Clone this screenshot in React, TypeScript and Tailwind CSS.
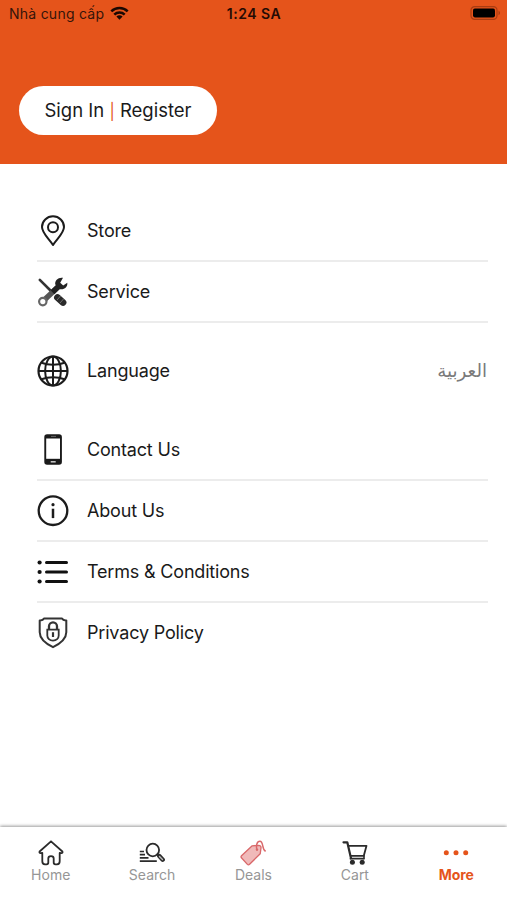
import type { ReactNode } from "react";

type IconProps = { children: ReactNode };

const MenuIcon = ({ children }: IconProps) => (
    <svg width="32" height="32" viewBox="0 0 32 32" fill="none" stroke="#1c1c1c" strokeWidth="2" className="shrink-0">
        {children}
    </svg>
);

const TabIcon = ({ children }: IconProps) => (
    <svg width="26" height="26" viewBox="0 0 26 26" fill="none" stroke="#2b2b2b" strokeWidth="1.8" strokeLinejoin="round" strokeLinecap="round">
        {children}
    </svg>
);

const StoreIcon = () => (
    <MenuIcon>
        <path d="M16 30C12.700 24.300 5 18.300 5 12a11 10.700 0 0 1 22 0c0 6.300-7.700 12.300-11 18Z" strokeLinejoin="round" />
        <circle cx="16" cy="12.300" r="5" />
    </MenuIcon>
);

const ServiceIcon = () => (
    <MenuIcon>
        <path d="M2.800 3.800 15 16" stroke="#333" strokeWidth="2.600" strokeLinecap="round" />
        <path d="m20.500 21.500 5.500 5" stroke="#2b2b2b" strokeWidth="6.800" strokeLinecap="round" />
        <path d="m23.500 20-3.500 4M26.500 23l-3.500 4" stroke="#777" strokeWidth="0.900" />
        <path d="M7 24.200 22 10" stroke="#555" strokeWidth="5.400" />
        <path d="M15.500 16.200 22.500 9.500" stroke="#222" strokeWidth="5.400" />
        <path d="M26 1.800c-4.500-.8-8.500 2.400-7.700 6.700l4.700 4.700c4 .8 7.900-1.900 7.300-6.400l-4.100 2.700-3-2.800Z" fill="#222" stroke="none" />
        <circle cx="5.800" cy="25.600" r="3.700" stroke="#666" strokeWidth="2.200" fill="#fff" />
    </MenuIcon>
);

const LanguageIcon = () => (
    <MenuIcon>
        <circle cx="16" cy="16" r="14.500" strokeWidth="2.200" />
        <ellipse cx="16" cy="16" rx="7.900" ry="14.500" />
        <path d="M16 1.500v29M1.500 16h29" />
        <path d="M4.500 7.800c6.500 2.600 16.500 2.600 23 0M4.500 24.200c6.500-2.600 16.500-2.600 23 0" />
    </MenuIcon>
);

const ContactIcon = () => (
    <MenuIcon>
        <rect x="7.300" y="0.300" width="17.600" height="30.500" rx="2.800" fill="#1a1a1a" stroke="none" />
        <rect x="9.200" y="4.500" width="13.800" height="20.300" fill="#fff" stroke="none" />
        <path d="M14 2.400h5" stroke="#777" strokeWidth="0.800" />
        <path d="M13.700 27.800h5" stroke="#ccc" strokeWidth="1.500" />
    </MenuIcon>
);

const AboutIcon = () => (
    <MenuIcon>
        <circle cx="16" cy="15.700" r="14.300" strokeWidth="2.300" />
        <circle cx="16" cy="9.700" r="1.600" fill="#1c1c1c" stroke="none" />
        <path d="M16 13.700v9.400" strokeWidth="2.500" />
    </MenuIcon>
);

const TermsIcon = () => (
    <MenuIcon>
        <g fill="#111" stroke="none">
            <circle cx="2.600" cy="6.500" r="2.100" />
            <circle cx="2.600" cy="16" r="2.100" />
            <circle cx="2.600" cy="25.500" r="2.100" />
        </g>
        <path d="M9.500 6.500h20M9.500 16h20M9.500 25.500h20" stroke="#111" strokeWidth="3" strokeLinecap="round" />
    </MenuIcon>
);

const PrivacyIcon = () => (
    <MenuIcon>
        <path d="M7 1.500h18c.7 1.400 2.300 2 4.300 1.900v11.800c0 7.500-6.800 11.700-13.300 15C9.500 26.900 2.700 22.700 2.700 15.200V3.400C4.700 3.500 6.300 2.900 7 1.500Z" stroke="#333" strokeWidth="2" strokeLinejoin="round" />
        <path d="M10.300 12.700h11.400v5.900c0 2.800-2.300 5-5.700 5s-5.700-2.200-5.700-5Z" stroke="#333" strokeWidth="1.800" />
        <path d="M12 12.700V9.300a4 4 0 0 1 8 0v3.400" stroke="#333" strokeWidth="2.300" />
        <path d="M16 15.200v4.800" stroke="#333" strokeWidth="2.200" />
    </MenuIcon>
);

const HomeIcon = () => (
    <TabIcon>
        <path d="M13 1.300 1.600 11.500c-.5 1 .1 1.800 1.200 1.600l1.500-.2v8.400c0 2 .7 3 2.700 3h1.600c1.200 0 1.700-.6 1.700-1.700v-4c0-1.600.7-2.400 2.700-2.400s2.700.8 2.700 2.400v4c0 1.100.5 1.700 1.700 1.700H19c2 0 2.700-1 2.700-3v-8.400l1.500.2c1.100.2 1.700-.6 1.200-1.600Z" />
    </TabIcon>
);

const SearchIcon = () => (
    <TabIcon>
        <circle cx="13.800" cy="10" r="6.300" />
        <path d="m18.300 14.400 1.500 1.300" />
        <path d="m20.300 16.100 3.400 3.600" strokeWidth="4.400" />
        <path d="m20.500 16.400 3 3.100" stroke="#bbb" strokeWidth="1.400" />
        <path d="M.8 11.500h4.200M.8 14.600h5.200M.8 17.800h8.700M.8 21.100h17" strokeWidth="1.700" strokeLinecap="butt" />
    </TabIcon>
);

const DealsIcon = () => (
    <TabIcon>
        <path d="M1.500 15.800c-.6.600-.6 1.300-.1 2l6 6.600c.6.600 1.500.6 2.200-.1L20.200 13.800 21 8c.2-1.600-.7-2.700-2.300-2.700L12.200 5.800Z" fill="#f0b9b9" stroke="#d9686a" strokeWidth="1.300" />
        <path d="M17 10C15.700 5.500 17 1.300 19.900 1.300c3.800 0 1.900 7.900 5.300 9.700" stroke="#d9686a" strokeWidth="1.500" />
        <circle cx="17" cy="9.600" r="1.200" fill="#d9686a" stroke="none" />
    </TabIcon>
);

const CartIcon = () => (
    <TabIcon>
        <path d="M1.500 2.300h3.800L9 18.300" strokeWidth="2.200" />
        <path d="M6.500 5.800h18l-2.700 10H8.800M8.500 18.700h13" strokeWidth="1.800" />
        <path d="M22 15.800v2.900" strokeWidth="1.600" />
        <circle cx="10.400" cy="22.200" r="2.500" fill="#2b2b2b" stroke="none" />
        <circle cx="20.200" cy="22.200" r="2.500" fill="#2b2b2b" stroke="none" />
    </TabIcon>
);

const MoreIcon = () => (
    <TabIcon>
        <g fill="#e5541b" stroke="none">
            <circle cx="3.300" cy="12.700" r="2.500" />
            <circle cx="13" cy="12.700" r="2.500" />
            <circle cx="22.700" cy="12.700" r="2.500" />
        </g>
    </TabIcon>
);

const groups = [
    [
        { label: "Store", icon: <StoreIcon />, line: true },
        { label: "Service", icon: <ServiceIcon />, line: true },
    ],
    [{ label: "Language", icon: <LanguageIcon />, line: false, value: "العربية" }],
    [
        { label: "Contact Us", icon: <ContactIcon />, line: true },
        { label: "About Us", icon: <AboutIcon />, line: true },
        { label: "Terms & Conditions", icon: <TermsIcon />, line: true },
        { label: "Privacy Policy", icon: <PrivacyIcon />, line: false },
    ],
];

const tabs = [
    { label: "Home", icon: <HomeIcon /> },
    { label: "Search", icon: <SearchIcon /> },
    { label: "Deals", icon: <DealsIcon /> },
    { label: "Cart", icon: <CartIcon /> },
    { label: "More", icon: <MoreIcon />, active: true },
];

const StatusBar = () => (
    <div className="grid grid-cols-3 items-center h-[26px] pl-[9px] pr-[6px] text-[14px] text-[#35140a]">
        <div className="flex items-center gap-[6px]">
            <span className="tracking-[0.25px] whitespace-nowrap">Nhà cung cấp</span>
            <svg width="19" height="14" viewBox="0 0 18 14" fill="none" stroke="#1b0802" strokeWidth="2.500" className="mb-px">
                <path d="M.8 5.400a11.800 11.800 0 0 1 16.400 0M3.800 8.600a7.400 7.400 0 0 1 10.400 0" />
                <path d="M9 13.700 5.900 10.600a4.600 4.600 0 0 1 6.200 0Z" fill="#1b0802" stroke="none" />
            </svg>
        </div>
        <div className="text-center font-semibold tracking-[0.5px] -ml-[2px] text-[#240b04]">1:24 SA</div>
        <svg width="31" height="14" viewBox="0 0 31 14" className="justify-self-end">
            <rect x="1" y="0.700" width="26" height="12.600" rx="3.600" fill="none" stroke="#a93c12" strokeWidth="1.200" />
            <rect x="3" y="2.600" width="22" height="8.800" rx="1.800" fill="#000" />
            <path d="M28.500 4.800c2 .7 2 3.700 0 4.400Z" fill="#a93c12" />
        </svg>
    </div>
);

const App = () => {
    return (
        <div className="flex flex-col w-[507px] h-[900px] overflow-hidden bg-white font-['Inter','Noto_Sans',sans-serif]">
            {/* header */}
            <header className="h-[163.500px] shrink-0 bg-[#e5541b]">
                <StatusBar />
                <button className="flex items-center justify-center mt-[60px] ml-[19px] w-[198px] h-[49px] rounded-full bg-white text-[18.500px] text-[#1a1a1a] whitespace-pre">
                    Sign In <span className="text-[16px] text-[#e5541b]">|</span> Register
                </button>
            </header>

            {/* menu */}
            <main className="flex-1 flex flex-col gap-[18px] pt-[36.500px] pl-[37px] pr-[19px]">
                {groups.map((rows, i) => (
                    <section key={i}>
                        {rows.map((row) => (
                            <div key={row.label} className="relative flex items-center gap-[18px] h-[61px] text-[18px] tracking-[-0.180px] text-[#1a1a1a]">
                                {row.icon}
                                <span className="flex-1">{row.label}</span>
                                {row.value && (
                                    <span lang="ar" dir="rtl" className="mr-[1px] tracking-normal font-['DejaVu_Sans','Noto_Sans',sans-serif] text-[18.200px] text-[#7a7a7a]">
                                        {row.value}
                                    </span>
                                )}
                                {row.line && <div className="absolute inset-x-0 bottom-[-1px] h-[2px] bg-[#ececec]" />}
                            </div>
                        ))}
                    </section>
                ))}
            </main>

            {/* bottom tabs */}
            <nav className="grid grid-cols-5 h-[73.500px] shrink-0 pt-[13.500px] bg-white shadow-[0_-1px_3px_rgba(0,0,0,0.4)]">
                {tabs.map((tab) => (
                    <div key={tab.label} className="flex flex-col items-center">
                        {tab.icon}
                        <span
                            className={
                                tab.active
                                    ? "text-[14px] leading-[18px] font-bold text-[#e5541b]"
                                    : "text-[14px] leading-[18px] text-[#969696]"
                            }
                        >
                            {tab.label}
                        </span>
                    </div>
                ))}
            </nav>
        </div>
    );
};

export default App;
